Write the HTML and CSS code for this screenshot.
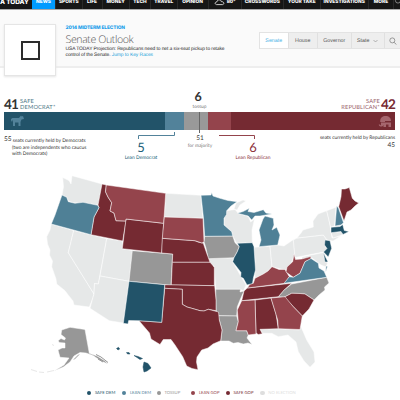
FILE: index.html
```html
<!DOCTYPE html>
<html lang="en">
<head>
<meta charset="utf-8">
<title>Senate Outlook</title>
<link rel="stylesheet" href="styles.css">
</head>
<body>
<nav class="nav">
  <span class="brand">A TODAY</span><span class="active">NEWS</span><span>SPORTS</span><span>LIFE</span><span>MONEY</span><span>TECH</span><span>TRAVEL</span><span>OPINION</span>
  <span class="weather"><svg width="11" height="7" viewBox="0 0 11 7"><path d="M2.5 5.6C.5 5.2.8 3 2.8 3 3.2.2 7 .2 7.3 2.6 10.2 2.5 10.6 5.2 8.6 5.6Z" fill="none" stroke="#ddd" stroke-width=".9"/></svg>80°</span>
  <span>CROSSWORDS</span><span>YOUR TAKE</span><span>INVESTIGATIONS</span><span>MORE</span>
  <span class="glass"><svg width="6" height="7" viewBox="0 0 6 7"><circle cx="4" cy="2.5" r="2.6" fill="none" stroke="#999" stroke-width=".8"/></svg></span>
</nav>
<header class="hero">
  <div class="logo"><i></i></div>
  <div class="intro">
    <div class="kicker">2014 MIDTERM ELECTION</div>
    <h1>Senate Outlook</h1>
    <p>USA TODAY Projection: Republicans need to net a six-seat pickup to retake<br>control of the Senate. <a>Jump to Key Races</a></p>
  </div>
  <div class="tabs">
    <span class="on">Senate</span><span>House</span><span>Governor</span><span class="state">State<svg width="5" height="4" viewBox="0 0 5 4"><path d="M.5 1 2.500 3 4.500 1" fill="none" stroke="#888" stroke-width=".6"/></svg></span>
    <span><svg width="8" height="8" viewBox="0 0 8 8"><circle cx="3.300" cy="3.400" r="2.500" fill="none" stroke="#777" stroke-width=".7"/><path d="M5.200 5.300 7.200 7.500" stroke="#777" stroke-width=".8"/></svg></span>
  </div>
</header>
<main>
  <section class="totals">
    <div class="total dem"><b>41</b><span>SAFE<br>DEMOCRAT*</span></div>
    <div class="total mid"><b>6</b><span>tossup</span></div>
    <div class="total gop"><span>SAFE<br>REPUBLICAN*</span><b>42</b></div>
  </section>
  <div class="bar">
    <div class="seg sd"><svg width="15" height="12" viewBox="0 0 15 12"><path d="M1 4 2.500 3H9L11 .5 11.700 1.500 13 1 14 4 11.500 4.500 10.500 7V11H8.500V7.500H5V11H3V7L2.200 5 1 7Z" fill="#52829a"/></svg></div>
    <div class="seg ld"></div><div class="seg tu"><i></i></div><div class="seg lg"></div>
    <div class="seg sg"><svg width="14" height="13" viewBox="0 0 14 13"><path d="M2.200 6C2.300 2.500 4.500 1 7.500 1 11 1 13 3 13 6H7V7H2.200ZM3 7.500H13V12H10.500V9.500H8V12H5.500V10C4.500 12.300 1 12 .7 9.500H2C2.300 10.800 3.200 10.500 3 9Z" fill="#a5666e"/></svg></div>
  </div>
  <section class="under">
    <div class="held left"><b>55</b> seats currently held by Democrats<p>(two are independents who caucus<br>with Democrats)</p></div>
    <div class="lean d"><svg width="38" height="8" viewBox="0 0 38 8"><path d="M.5 8V4.500H36.500V1" fill="none" stroke="#52829a" stroke-width="1"/></svg><b>5</b><span>Lean Democrat</span></div>
    <div class="major"><b>51</b><span>for majority</span></div>
    <div class="lean g"><svg width="38" height="8" viewBox="0 0 38 8"><path d="M1 4.500H36.500V8" fill="none" stroke="#94444c" stroke-width="1"/></svg><b>6</b><span>Lean Republican</span></div>
    <div class="held right">seats currently held by Republicans<b>45</b></div>
  </section>
  <svg class="map" width="400" height="210" viewBox="0 170 400 210">
    <g class="no">
      <path d="M62.700 177.500 69 180.500 71 184 72 175.700 102 184 98.300 205.300 83 202.700 75 203 68.500 201.500 66.700 197.300 62 195 63.500 187Z"/>
      <path d="M51.300 224 73.700 230.500 68.300 252.700 94 294 92.500 299 89.300 307 74 305 73 301 69 296 65 290.700 56.700 284 56 279 51.700 266.700 52.500 261 49.500 255 50 250 47.500 244 46.700 236.700 50 230Z"/>
      <path d="M73.700 230.500 106.700 238.700 98.300 284 94.500 283.500 94 294 68.300 252.700Z"/>
      <path d="M106.700 238.700 122.700 241 122.300 248.700 133 250.700 129 281.300 100 276Z"/>
      <path d="M100 276 129 281.300 123.300 323 109.300 320.700 90 308.300 92.500 299 94 294 94.500 283.500 98.300 284Z"/>
      <path d="M165.700 193.300 201 195.300 201.500 204 203 218.300 164.300 217Z"/>
      <path d="M226.700 210.700 235 209.500 238.300 213.300 248.300 216.500 250.700 222 254.500 219 252 230 252.300 242.700 236.700 243.300 232.700 236 231.700 231.700 224 225 224 218.300Z"/>
      <path d="M236 203 243 200 246 201 240 205 237 210 234 209Z"/>
      <path d="M208.300 258.700 234 257.700 232.700 261.700 240.700 276 246 285 243.500 291 240.500 289.300H215.700L214.300 266.700 210 262.300Z"/>
      <path d="M254.300 247.300 270 246.300 272 266.700 268 271 263.300 274 255 278.300 255 268Z"/>
      <path d="M270 246.300 277.700 245 284 246 293.500 239.500 295 255 290 265 285 270 272 266.700Z"/>
      <path d="M293.300 240 297 238 323.300 235 327 240 325 246 327 249 324 252 295 257.500Z"/>
      <path d="M297 238 301 233 303 230 313.300 227 313 221 318 214 326.700 210.700 329.500 222 332 238 341 236 333 241 327 240 323.300 235Z"/>
      <path d="M326.700 210.700 336 207.300 334.500 226 330.700 227.300Z"/>
      <path d="M331 232.500 343 231.500 342 235 333 238Z"/>
      <path d="M302 257 323.300 252.500 327.500 263 326 267 321 265 318.500 263 312 258 302 260Z"/>
      <path d="M260 329.300 278.300 328.700 299.300 330 301 326.700 306.700 340 314 352 315 362 310 367.300 304 361 298.300 351.700 296 342 288 335 278.300 336.700 271.700 333.300 262.300 333.300Z"/>
    </g>
    <g class="tossup">
      <path d="M132.300 250.700 172.700 254 171 285.300 129 281.300Z"/>
      <path d="M204.700 236.300 232.700 236 235 242.700 239.300 246.700 237.300 251.700 234 257.700 208.300 258.700 206 248.300 204 241.700Z"/>
      <path d="M215.700 289.300H240.500L240 292 244 291 240 300 237.300 306.700 236.700 316 218 315.700 216 310Z"/>
      <path d="M218 315.700 236.700 316 238.300 321.700 236 330.700H246.700L248.300 335 247 338 252 344.500 248 343 243.300 344 238 342.500 233.300 343.300 229 341 220.700 341 222 330 219.300 320Z"/>
      <path d="M278.300 296.700 284 290 291.700 284 326.700 277.300 329 283 324.500 287 325 290 319 295 314 300 305 294 300 293.500 291.700 293.300 284 297.300Z"/>
      <path d="M61.700 330 70 327.300 85 329.500 89.300 353.300 97 356 105 361 108 364 101 361 93 355.500 86 353 80 352.500 74 356 70 362 63.300 367 54 371 64 365 69 358 60 357.300 58 350 62 348 65 348 65 343 59 342.500 58.300 340.500 61 338.500 64.500 340 65.500 338 61 334.500Z"/>
      <path class="faint" d="M31 369.500 37 371.500M39 372 44 372.500M47 372 54 370.500M52 344.500 54 345.500"/>
      <path class="isles" d="M74 359.500 79 354.500M96 354.500 101 357 108 362.500M98 359 103 362"/>
    </g>
    <g class="safe-gop">
      <path d="M102 184 106.300 185 105.500 191.700 108 197 111.700 202.700 110 211 114 213 116 220.700 126 221 122.700 241 91 234.700 94 217 99 207.700 98 205Z"/>
      <path d="M126 219 163.700 223.300 161.700 253 122.300 248.700Z"/>
      <path d="M162.300 238.300 195 240.700 198 242 203.300 243.300 206.700 253.300 210 262.300H172.300L172.700 254 161.700 253Z"/>
      <path d="M172.300 262.300H210L212.500 265 214.300 267.500V285.700L171.300 285Z"/>
      <path d="M164.700 284.700 214.700 285.700 216 300V310.700L208.300 309.300 204 311 200 310.700 191.700 308.300 187 307 182.300 304.300V289.300L164.700 288.300Z"/>
      <path d="M164.700 288.300 182.300 289.300V304.300L187 307 191.700 308.300 200 310.700 204 311 208.300 309.300 218.500 312 219.300 320 222 330 220.700 340.700 213 344 208 348 201.700 350 197 357 196.500 362 198 369.700 192 368.500 186.700 366 182.700 356.700 175 345 171 339.500 163.300 339.500 160 344.500 151 339 149.500 333 139 320.700 161.700 322.300Z"/>
      <path d="M247.300 288 291.700 283.300 284 290 278.300 296.700 241.700 300.700 244 291Z"/>
      <path d="M255 300 271 298 276 314 278.300 328.700 260 329.300 262.300 333.700 258.300 334.500 256 333Z"/>
      <path d="M284 297.300 291.700 293.300 300 293.500 305 294 314 300 309 309 302.300 316 293.300 306.700Z"/>
      <path d="M338.700 206.700 341 196.700 341.500 189 345 189 349.300 187.500 352.300 198.300 355 201 358.700 203 355 206 351 210 347 212 344 221Z"/>
    </g>
    <g class="lean-gop">
      <path d="M106.300 185 165.700 193.300 163.700 223.300 126 219 125.700 221 116 220.700 114 213 110 211 111.700 202.700 108 197 105.500 191.700Z"/>
      <path d="M164.300 217 203 218.300 204 241.700 202 243 195 240.700 162.300 238.300Z"/>
      <path d="M241.700 300.700 255 300 256 334 248.300 335 246.700 330.700H236L238.300 321.700 237.300 310Z"/>
      <path d="M271 298 285 296.700 293.300 306.700 302.300 316 300 329.500 278.300 328.700 277.700 320Z"/>
      <path d="M247.300 288 250 284 253.300 283.300 255 278.300 263.300 274 268 271 272 266.700 279 269.500 285 269.500 289.300 276.700 285 283.300Z"/>
      <path d="M294 254 295.500 259.500 301.700 259 310.700 256.500 311 259 305 261.700 300 273.300 293.300 277.300 286 272 287 267 292.700 261.700Z"/>
    </g>
    <g class="lean-dem">
      <path d="M62 195 66.700 197.300 68.300 201.700 75 203.300 83 202.300 97.700 205.300 99 207.700 94 217 91 234.700 51.300 224 55 215Z"/>
      <path d="M201 195.300 211 195 211.700 192.500 213 196 220 198.300 228 200.500 237 201.700 231 206 226.700 210.700 226.500 214.500 224 218.300V225L231.700 231.700 232.700 236 204.700 236.300 203.500 218.300Z"/>
      <path d="M237.300 213.300 243 211.500 249.300 208.300 248 211.500 254 212.500 263.300 209.700 266 213 272 214 260 216 255 216 251.700 220 248.300 216Z"/>
      <path d="M263 219 265 216 273.300 218.300 274 225 272 230 276.700 227.300 280 235 277.700 245 259 246.700 261 240 259 230Z"/>
      <path d="M284 283.300 289.300 276.700 293.300 277.300 300 273.300 305 261.700 311 258.500 318.300 263.300 319 268 324 271 326.700 277.300Z"/>
      <path d="M326 266 327.500 266.500 325.700 272Z"/>
      <path d="M336.700 206 338.500 208 343.500 222.700 341 225 335 226Z"/>
    </g>
    <g class="safe-dem">
      <path d="M129 281.300 164.700 284.700 161.700 322.300 139 320.700 128.700 320.500 128 324 123.300 323.300Z"/>
      <path d="M237.300 243.300 252.300 242.700 254 246.700 255.500 270 253.300 278.300 252.500 283.500 247 285 243.300 278.300 240.700 277 241 272.500 232.700 261.700 234 257.700 237.300 251.700 239.300 246.700Z"/>
      <path d="M331 227.300 340 226.500 342.700 224.500 344.300 230.500 349 231.500 343 234.500 341 231.500 331 232.700Z"/>
      <path d="M325 240 330 240.700 331.700 248.300 328.300 257 323.500 252 327 248.500 324.500 245Z"/>
      <path d="M323.300 252.500 328 262 325 262Z"/>
      <path d="M116.500 348.500 118.500 347.300 119.700 349 118 350ZM126.500 352.500 129 352.500 130 354 127.500 354ZM134 355.500 138 356.500 142.500 358.500 140 359.500ZM144 362 148 363.500 151 368 147 371 144 372 143 367Z" class="hawaii"/>
    </g>
  </svg>
  <footer class="legend">
    <span class="k1"><i></i>SAFE DEM</span><span class="k2"><i></i>LEAN DEM</span><span class="k3"><i></i>TOSSUP</span><span class="k4"><i></i>LEAN GOP</span><span class="k5"><i></i>SAFE GOP</span><span class="k6"><i></i>NO ELECTION</span>
  </footer>
</main>
</body>
</html>
```
FILE: styles.css
```css
* { box-sizing: border-box; }
body { margin: 0; width: 400px; height: 400px; overflow: hidden; background: #fff; color: #333; font-family: "Liberation Sans", Arial, sans-serif; text-rendering: geometricPrecision; }
.nav { height: 9px; overflow: hidden; display: grid; grid-template-columns: 32px 24px 26.500px 20px 27.500px 21px 26.500px 31px 33px 42.500px 36.500px 48.500px 25px 6px; background: #161616; color: #fff; font: 800 4.800px/8px Inter, sans-serif; text-align: center; white-space: nowrap; }
.nav > span { margin-top: -2px; height: 11px; border-right: 1px solid #292929; }
.nav .brand { font-size: 6.500px; text-align: right; padding-right: 4px; border: 0; letter-spacing: -.1px; }
.nav .active { background: #009bff; }
.nav .weather { display: flex; justify-content: center; gap: 2px; }
.weather svg { margin-top: 1px; }
.nav .glass { border: 0; }
.hero { height: 59px; background: #fafafa; border-bottom: 2px solid #eee; border-top: 1px solid #aaa; display: flex; align-items: flex-start; padding-left: 4px; }
.logo { flex: none; width: 52px; height: 52px; margin-top: 14px; background: #fff; border: 1px solid #e5e5e5; box-shadow: 0 1px 2px #e5e5e5; display: grid; place-items: center; }
.logo i { width: 19px; height: 19px; border: 2px solid #2c2c2c; }
.intro { flex: none; width: 202.500px; padding: 14.500px 0 0 9.500px; white-space: nowrap; }
.kicker { color: #1a9fea; font: 800 4.800px/6px Inter, sans-serif; letter-spacing: -.08px; }
h1 { margin: 3px 0 0; font: 300 10.600px/13px "Open Sans", sans-serif; color: #555; letter-spacing: -.4px; }
p { margin: 0; }
.intro p { font-size: 4.900px; line-height: 6.200px; color: #222; letter-spacing: -.07px; }
.intro a { color: #1a9fd9; }
.tabs { flex: none; margin-top: 22px; height: 17px; display: grid; grid-template-columns: 29.500px 28.500px 34.500px 32.500px 17px; background: #eee; border: 1px solid #e3e3e3; font-size: 5.300px; color: #555; }
.tabs span { display: flex; align-items: center; justify-content: center; border-right: 1px solid #e0e0e0; }
.tabs .on { background: #fff; color: #4db3e6; }
.tabs .state { gap: 4px; }
.totals { height: 44px; padding: 0 5px 0 4px; display: grid; grid-template-columns: 1fr 40px 1fr; font-family: Lato, sans-serif; }
.total { display: flex; gap: 2px; align-items: flex-start; }
.total b { font: 700 13.500px/14px Lato, sans-serif; letter-spacing: -.8px; }
.total span { font-size: 5.700px; line-height: 5.700px; letter-spacing: .15px; margin-top: 2px; }
.dem, .gop { padding-top: 29px; }
.dem span { color: #4e7787; }
.gop { justify-content: flex-end; text-align: right; color: #782b34; }
.total.gop { gap: 1px; }
.gop span { color: #9a626a; }
.total.mid { flex-direction: column; align-items: center; gap: 0; padding-top: 21px; }
.total.mid b { font: 700 12.500px/15px Lato, sans-serif; letter-spacing: 0; margin-right: 3px; }
.total.mid span { font-size: 4.800px; line-height: 5px; margin: 1px 0 0; letter-spacing: 0; color: #777; }
.bar { margin: 0 5px 0 4px; height: 18px; display: flex; }
.sd { width: 160.500px; background: #225369; padding: 3px; }
.ld { width: 19.500px; background: #52829a; }
.tu { width: 23.500px; background: #999; }
.tu i { display: block; width: 1px; height: 21px; margin-left: 15px; background: #666; }
.lg { width: 23.500px; background: #94444c; }
.sg { flex: 1; background: #752a32; padding: 3px; }
.seg svg { display: block; margin-left: auto; }
.sd svg { margin-left: 3px; }
.under { height: 38px; padding: 0 5px 0 4px; display: grid; grid-template-columns: 118px 56px 44px 60px 1fr; font-family: Lato, sans-serif; white-space: nowrap; }
.held { font-size: 4.900px; line-height: 8px; }
.held b { font-weight: 400; font-size: 6.500px; }
.left { padding-top: 7px; }
.left > b { display: inline-block; transform: translateY(-1.500px); }
.left p { padding-left: 8px; line-height: 5.800px; margin-top: 1px; }
.right { padding-top: 4px; text-align: right; }
.right b { display: block; line-height: 8px; }
.lean { display: flex; flex-direction: column; align-items: center; font-size: 4.900px; line-height: 6px; }
.lean svg { flex: none; }
.lean.d { color: #225f79; }
.lean.d svg { margin: 1px 0 0 14px; }
.lean.g { color: #8b3039; }
.lean.g svg { margin: 1px 30px 0 0; }
.lean b { font: 400 13px/15px Lato, sans-serif; margin-top: 1px; }
.lean.d b, .lean.d span { margin-right: 18px; }
.lean.g b, .lean.g span { margin-left: 2px; }
.major { display: flex; flex-direction: column; align-items: center; padding-top: 3.500px; font-size: 4.800px; line-height: 7px; color: #777; }
.major b { font: 400 6.500px/9px Lato, sans-serif; color: #333; }
.map { display: block; margin-top: 2px; }
.map path { stroke: #fff; stroke-width: .5; stroke-linejoin: round; }
.no { fill: #e6e8e8; }
.tossup { fill: #979797; }
.safe-gop { fill: #752a32; }
.lean-gop { fill: #94444c; }
.lean-dem { fill: #4f8096; }
.safe-dem { fill: #225369; }
.map .isles { stroke: #979797; stroke-width: 1; fill: none; }
.map .faint { stroke: #ddd; stroke-width: .7; fill: none; }
.map .hawaii { stroke: #225369; }
.legend { height: 20px; margin-top: 9px; padding-left: 87px; display: grid; grid-template-columns: 35px 34.500px 34.500px 34.700px 34.700px 40px; font: 4.200px/8px Lato, sans-serif; white-space: nowrap; }
.legend span { display: flex; align-items: center; gap: 3.500px; height: 8px; }
.legend i { width: 4.400px; height: 4.400px; border-radius: 50%; background: currentColor; }
.k1 { color: #225369; }
.k2 { color: #52829a; }
.k3 { color: #979797; }
.k4 { color: #94444c; }
.k5 { color: #752a32; }
.k6 { color: #dedede; }
```
